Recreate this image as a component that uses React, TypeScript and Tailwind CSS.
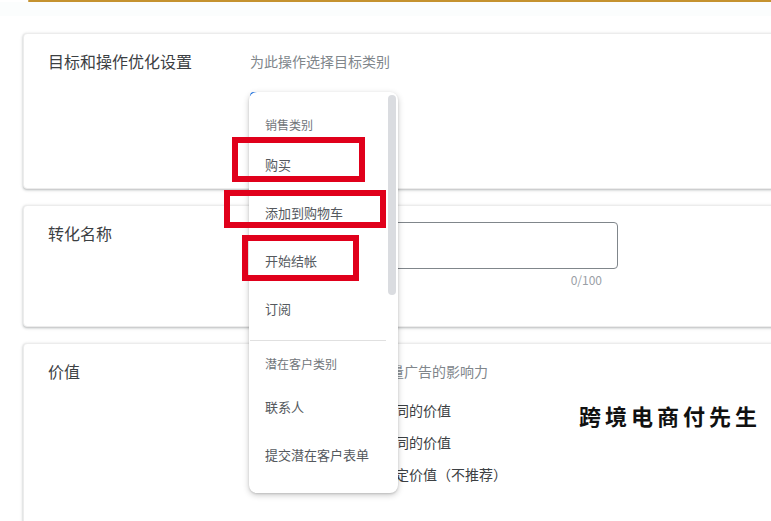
import React from "react";

const font = { fontFamily: '"Noto Sans CJK SC", "Noto Sans", sans-serif' };

function Card({ title, className, children }: { title: string; className: string; children?: React.ReactNode }) {
  return (
    <div
      className={`w-[800px] shrink-0 rounded-[4px] border border-[#ececec] bg-white shadow-[0_1px_2px_rgba(60,64,67,0.25),0_1px_3px_1px_rgba(60,64,67,0.1)] flex ${className}`}
    >
      <div className="w-[226px] shrink-0 pl-[24px] pt-[16px] text-[16px] leading-[22px] text-[#3c4043]">{title}</div>
      <div className="flex-1 pt-[16px]">{children}</div>
    </div>
  );
}

function MenuItem({ label }: { label: string }) {
  return <div className="h-[48px] flex items-center pl-[16px] text-[13px] text-[#55595e]">{label}</div>;
}

function Header({ label }: { label: string }) {
  return <div className="h-[20px] flex items-center pl-[16px] text-[12px] text-[#70757a]">{label}</div>;
}

function Radio({ label }: { label: string }) {
  return (
    <div className="h-[32px] flex items-center gap-[13px]">
      <div className="w-[20px] h-[20px] rounded-full border-2 border-[#5f6368]" />
      <span className="text-[14px] text-[#3c4043]">{label}</span>
    </div>
  );
}

export default function App() {
  return (
    <div className="relative w-[771px] h-[521px] overflow-hidden bg-white" style={font}>
      <div className="ml-[28px] h-[2px] bg-[#c4922f] rounded-l-full" />
      <div className="h-[14px] bg-[#fbfdfd]" />
      <div className="flex flex-col gap-[16px] pl-[23px] pt-[17px]">
        <Card title="目标和操作优化设置" className="h-[156px]">
          <div className="text-[14px] leading-[22px] text-[#80868b]">为此操作选择目标类别</div>
          <div className="mt-[20px] w-[136px] h-[40px] rounded-[4px] border-2 border-[#1a73e8]" />
        </Card>
        <Card title="转化名称" className="h-[122px]">
          <div className="w-[368px]">
            <div className="h-[47px] rounded-[4px] border border-[#80868b]" />
            <div className="mt-[3px] pr-[16px] text-right text-[12px] leading-[16px] text-[#9aa0a6]">0/100</div>
          </div>
        </Card>
        <Card title="价值" className="h-[200px]">
          <div className="text-[14px] leading-[22px] text-[#80868b]">为转化分配价值，以衡量广告的影响力</div>
          <div className="mt-[12px] flex flex-col">
            <Radio label="对每次转化使用相同的价值" />
            <Radio label="对每次转化使用不同的价值" />
            <Radio label="不为此转化操作设定价值（不推荐）" />
          </div>
        </Card>
      </div>

      {/* dropdown menu overlay */}
      <div className="absolute left-[249px] top-[92px] w-[149px] h-[401px] rounded-[8px] bg-white shadow-[0_2px_6px_rgba(0,0,0,0.22),0_1px_2px_rgba(0,0,0,0.12)]">
        <div className="absolute right-[2px] top-[3px] w-[8px] h-[200px] rounded-full bg-[#dadce0]" />
        <div className="pr-[12px]">
          <div className="pt-[23px]" />
          <Header label="销售类别" />
          <div className="h-[6px]" />
          <MenuItem label="购买" />
          <MenuItem label="添加到购物车" />
          <MenuItem label="开始结帐" />
          <MenuItem label="订阅" />
          <div className="mt-[7px] ml-[1px] h-px bg-[#e0e0e0]" />
          <div className="h-[13px]" />
          <Header label="潜在客户类别" />
          <div className="h-[9px]" />
          <MenuItem label="联系人" />
          <MenuItem label="提交潜在客户表单" />
        </div>
      </div>

      {/* red annotation boxes */}
      <div className="absolute left-[232px] top-[137px] w-[133px] h-[45px] border-[6px] border-[#e0001b]" />
      <div className="absolute left-[224px] top-[190px] w-[162px] h-[38px] border-[6px] border-[#e0001b]" />
      <div className="absolute left-[242px] top-[235px] w-[117px] h-[46px] border-[6px] border-[#e0001b]" />

      {/* watermark */}
      <div className="absolute left-[579px] top-[401px] text-[22px] leading-[28px] font-bold tracking-[4px] text-[#111]">
        跨境电商付先生
      </div>
    </div>
  );
}
